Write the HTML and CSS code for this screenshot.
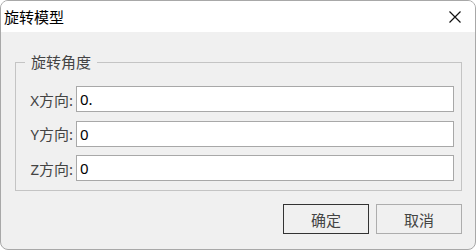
FILE: index.html
```html
<!DOCTYPE html>
<html lang="zh-CN">
<head>
  <meta charset="UTF-8" />
  <title>旋转模型</title>
  <link rel="stylesheet" href="styles.css">
</head>
<body>
  <div class="window">
    <div class="titlebar">
      <span class="title">旋转模型</span>
      <span class="close">
        <svg width="12" height="12" viewBox="0 0 12 12"><path d="M0.5 0.5 L11.5 11.5 M11.5 0.5 L0.5 11.5" stroke="#111" stroke-width="1.2" fill="none"/></svg>
      </span>
    </div>

    <div class="body">
      <div class="group">
        <span class="group-title">旋转角度</span>
        <div class="row">
          <label for="rx">X方向:</label>
          <input type="text" id="rx" value="0." />
        </div>
        <div class="row">
          <label for="ry">Y方向:</label>
          <input type="text" id="ry" value="0" />
        </div>
        <div class="row">
          <label for="rz">Z方向:</label>
          <input type="text" id="rz" value="0" />
        </div>
      </div>

      <div class="buttons">
        <button class="btn default">确定</button>
        <button class="btn">取消</button>
      </div>
    </div>
  </div>
</body>
</html>
```

FILE: styles.css
```css
body {
  margin: 0;
  font-family: "Noto Sans", "Noto Sans CJK SC", sans-serif;
  background: #fff;
}
.window {
  width: 476px;
  height: 250px;
  box-sizing: border-box;
  border: 1px solid #a8a8a8;
  border-radius: 8px;
  overflow: hidden;
  background: #f0f0f0;
}
.titlebar {
  height: 31px;
  background: #fff;
  display: flex;
  align-items: center;
  justify-content: space-between;
  padding: 0 14px 0 3px;
}
.title { font-size: 15px; color: #000; }
.close { display: flex; }

.body { padding: 0 13px 0 14px; }

/* group box with caption sitting on the top border */
.group {
  position: relative;
  margin-top: 30px;
  padding: 23px 7px 9px 9px;
  border: 1px solid #c4c4c4;
  display: flex;
  flex-direction: column;
  gap: 8.5px;
}
.group-title {
  position: absolute;
  top: -11px;
  left: 9px;
  padding: 0 6px;
  background: #f0f0f0;
  font-size: 15px;
  line-height: 20px;
  color: #444;
}
.row {
  display: flex;
  align-items: center;
  height: 26px;
}
.row label {
  width: 48px;
  margin-right: 3px;
  text-align: right;
  font-size: 15px;
  color: #444;
}
.row input {
  flex: 1;
  height: 26px;
  box-sizing: border-box;
  border: 1px solid #a8a8a8;
  padding: 0 3px;
  font-family: inherit;
  font-size: 15px;
  color: #000;
  background: #fff;
  outline: none;
}

.buttons {
  display: flex;
  justify-content: flex-end;
  gap: 7px;
  margin-top: 13px;
}
.btn {
  width: 86px;
  height: 30px;
  box-sizing: border-box;
  border: 1px solid #adadad;
  background: #f0f0f0;
  font-family: inherit;
  font-size: 15px;
  color: #444;
  padding: 0;
}
.btn.default { border-color: #333; }
```
